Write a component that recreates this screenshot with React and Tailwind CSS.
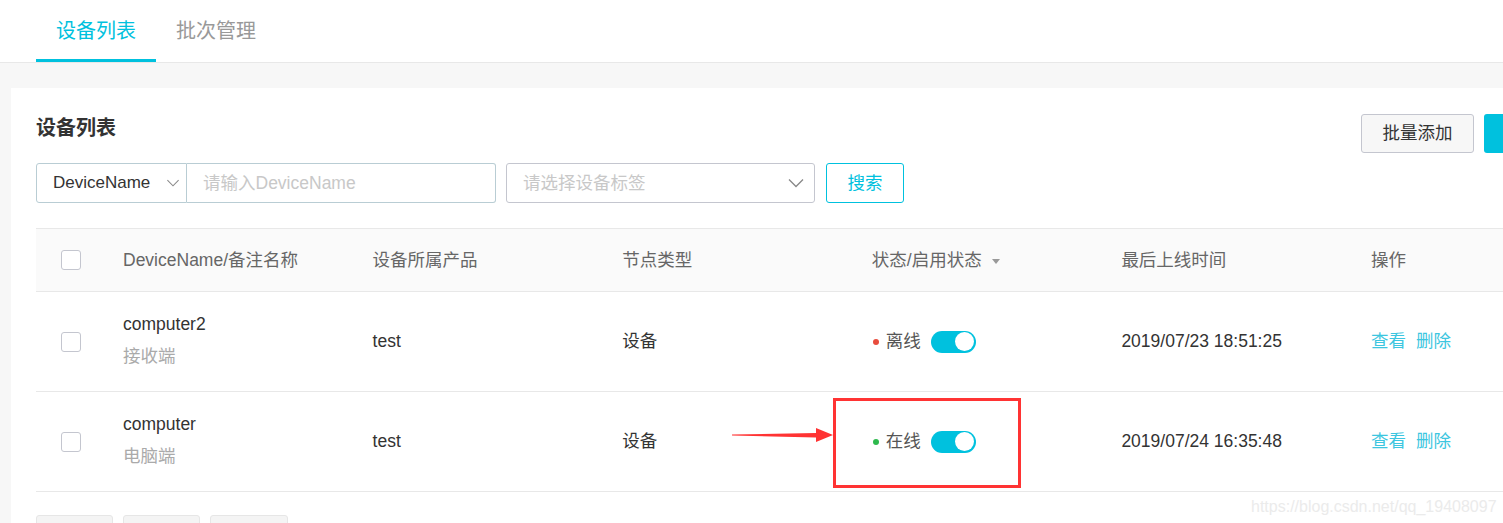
const rows = [
  { name: "computer2", note: "接收端", product: "test", type: "设备", status: "离线", dot: "bg-[#e84c3d]", time: "2019/07/23 18:51:25" },
  { name: "computer", note: "电脑端", product: "test", type: "设备", status: "在线", dot: "bg-[#2eb94d]", time: "2019/07/24 16:35:48" },
];

function Chevron({ className }) {
  return (
    <svg className={className} width="16" height="10" viewBox="0 0 16 10" fill="none">
      <polyline points="1,1.5 8,8.5 15,1.5" stroke="#888" strokeWidth="1.3" />
    </svg>
  );
}

function Checkbox() {
  return <span className="block h-[20px] w-[20px] rounded-[3px] border border-[#c4c6cf] bg-white" />;
}

function Toggle() {
  return (
    <span className="flex h-[22px] w-[45px] items-center justify-end rounded-full bg-[#00c1de] pr-[2px]">
      <span className="block h-[19px] w-[19px] rounded-full bg-white" />
    </span>
  );
}

const col = "w-[249.6px] shrink-0";

export default function App() {
  return (
    <div
      className="relative h-[523px] w-full overflow-hidden bg-[#f7f7f7]"
      style={{ fontFamily: '"Liberation Sans", "Noto Sans CJK SC", sans-serif' }}
    >
      <div className="flex h-[63px] border-b border-[#e8e8e8] bg-white pl-[36px]">
        <div className="flex h-full items-center border-b-[3px] border-[#00c1de] px-[20px] pt-[3px] text-[20px] text-[#00c1de]">设备列表</div>
        <div className="flex h-full items-center px-[20px] text-[20px] text-[#999]">批次管理</div>
      </div>

      <div className="pl-[11px] pt-[25px]">
        <div className="w-[1640px] bg-white pl-[25px] pr-[54px] pt-[26px]">
          <div className="flex items-start justify-between">
            <div className="text-[20px] font-bold leading-[28px] text-[#333]">设备列表</div>
            <div className="flex gap-[10px]">
              <button className="h-[39px] w-[113px] rounded-[3px] border border-[#c4c6cf] bg-[#f7f7f7] text-[17.5px] text-[#333]">批量添加</button>
              <button aria-label="添加设备" className="h-[39px] w-[113px] rounded-[3px] bg-[#00c1de]" />
            </div>
          </div>

          <div className="mt-[10px] flex h-[40px] items-center">
            <div className="flex h-full w-[151px] items-center justify-between rounded-l-[3px] border border-[#b9cdd4] pl-[16px] pr-[6px] text-[17px] text-[#333]">
              DeviceName
              <Chevron className="h-[8px] w-[14px]" />
            </div>
            <div className="flex h-full w-[309px] items-center rounded-r-[3px] border border-l-0 border-[#b9cdd4] pl-[16px] text-[17.5px] text-[#c8c8c8]">请输入DeviceName</div>
            <div className="ml-[10px] flex h-full w-[309px] items-center justify-between rounded-[3px] border border-[#c4c6cf] pl-[16px] pr-[10px] text-[17.5px] text-[#c8c8c8]">
              请选择设备标签
              <Chevron className="h-[10px] w-[16px]" />
            </div>
            <button className="ml-[11px] h-[40px] w-[78px] rounded-[3px] border border-[#00c1de] bg-white text-[17.5px] text-[#00c1de]">搜索</button>
          </div>

          <div className="mt-[25px] w-[1587px]">
            <div className="flex h-[64px] items-center border-y border-[#e8e8e8] bg-[#fafafa] text-[17.5px] text-[#666]">
              <div className="w-[87px] shrink-0 pl-[25px]"><Checkbox /></div>
              <div className={col}>DeviceName/备注名称</div>
              <div className={col}>设备所属产品</div>
              <div className={col}>节点类型</div>
              <div className={`${col} flex items-center`}>
                状态/启用状态
                <span className="ml-[10px] mt-[2px] h-0 w-0 border-x-[4px] border-t-[5px] border-x-transparent border-t-[#999]" />
              </div>
              <div className={col}>最后上线时间</div>
              <div className={col}>操作</div>
            </div>
            {rows.map((r) => (
              <div key={r.name} className="flex h-[100px] items-center border-b border-[#e8e8e8] text-[17.5px] text-[#333]">
                <div className="w-[87px] shrink-0 pl-[25px]"><Checkbox /></div>
                <div className={`${col} mb-[4px] leading-[32px]`}>
                  <div>{r.name}</div>
                  <div className="text-[#aaa]">{r.note}</div>
                </div>
                <div className={col}>{r.product}</div>
                <div className={col}>{r.type}</div>
                <div className={`${col} flex items-center`}>
                  <span className={`ml-[1px] block h-[6px] w-[6px] rounded-full ${r.dot}`} />
                  <span className="ml-[7px] text-[#555]">{r.status}</span>
                  <span className="ml-[10px]"><Toggle /></span>
                </div>
                <div className={col}>{r.time}</div>
                <div className={`${col} flex gap-[10px] text-[#3cc6e0]`}>
                  <span>查看</span>
                  <span>删除</span>
                </div>
              </div>
            ))}
          </div>

          <div className="mt-[23px] flex gap-[10px]">
            <div className="h-[30px] w-[77px] rounded-[3px] border border-[#e6e6e6] bg-[#f4f4f4]" />
            <div className="h-[30px] w-[77px] rounded-[3px] border border-[#e6e6e6] bg-[#f4f4f4]" />
            <div className="h-[30px] w-[78px] rounded-[3px] border border-[#e6e6e6] bg-[#f4f4f4]" />
          </div>
        </div>
      </div>

      <svg className="absolute left-[730px] top-[425px]" width="106" height="20" viewBox="0 0 106 20">
        <polygon points="2,9.5 86,8 86,3 103,10 86,17 86,12.5 2,10.5" fill="#ff3333" />
      </svg>
      <div className="absolute left-[833px] top-[398px] h-[90px] w-[188px] border-[3px] border-[#ff3333]" />

      <div className="absolute left-[1251px] top-[495px] text-[16px] text-[#ebebeb]">https://blog.csdn.net/qq_19408097</div>
    </div>
  );
}
